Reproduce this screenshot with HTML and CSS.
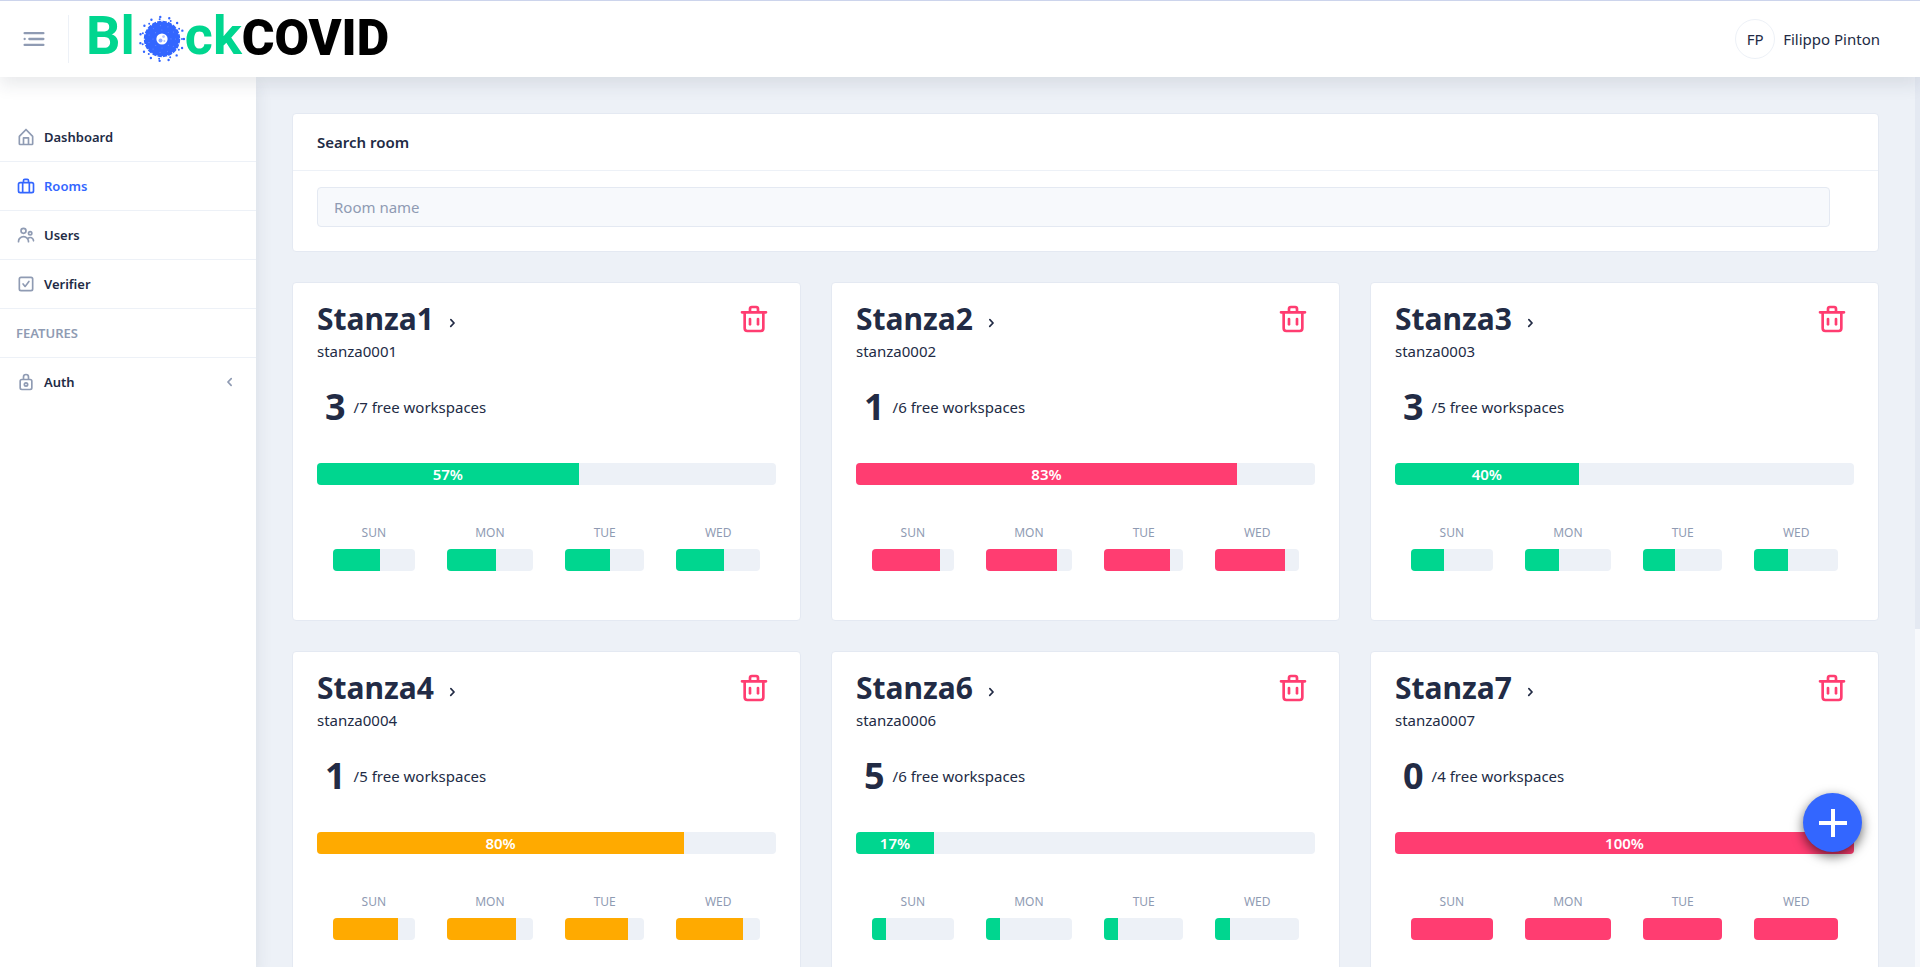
FILE: index.html
```html
<!DOCTYPE html>
<html lang="en">
<head>
<meta charset="utf-8">
<title>BlockCOVID - Rooms</title>
<meta name="viewport" content="width=device-width, initial-scale=1">
<link rel="stylesheet" href="styles.css">
</head>
<body>
<svg class="sprite" aria-hidden="true">
  <symbol id="home" viewBox="0 0 24 24"><path d="M20.42 10.18L12.71 2.3a1 1 0 0 0-1.42 0l-7.71 7.89A2 2 0 0 0 3 11.62V20a2 2 0 0 0 1.89 2h14.22A2 2 0 0 0 21 20v-8.38a2.07 2.07 0 0 0-.58-1.44zM10 20v-6h4v6zm9 0h-3v-7a1 1 0 0 0-1-1H9a1 1 0 0 0-1 1v7H5v-8.42l7-7.15 7 7.19z"/></symbol>
  <symbol id="briefcase" viewBox="0 0 24 24"><path d="M19 7h-3V5.5A2.5 2.5 0 0 0 13.5 3h-3A2.5 2.5 0 0 0 8 5.5V7H5a3 3 0 0 0-3 3v8a3 3 0 0 0 3 3h14a3 3 0 0 0 3-3v-8a3 3 0 0 0-3-3zm-4 2v10H9V9zm-5-3.5a.5.5 0 0 1 .5-.5h3a.5.5 0 0 1 .5.5V7h-4zM4 18v-8a1 1 0 0 1 1-1h2v10H5a1 1 0 0 1-1-1zm16 0a1 1 0 0 1-1 1h-2V9h2a1 1 0 0 1 1 1z"/></symbol>
  <symbol id="people" viewBox="0 0 24 24"><path d="M9 11a4 4 0 1 0-4-4 4 4 0 0 0 4 4zm0-6a2 2 0 1 1-2 2 2 2 0 0 1 2-2zm8 8a3 3 0 1 0-3-3 3 3 0 0 0 3 3zm0-4a1 1 0 1 1-1 1 1 1 0 0 1 1-1zm0 5a5 5 0 0 0-3.06 1.05A7 7 0 0 0 2 20a1 1 0 0 0 2 0 5 5 0 0 1 10 0 1 1 0 0 0 2 0 6.9 6.9 0 0 0-.86-3.35A3 3 0 0 1 20 19a1 1 0 0 0 2 0 5 5 0 0 0-5-5z"/></symbol>
  <symbol id="check" viewBox="0 0 24 24"><path d="M18 3H6a3 3 0 0 0-3 3v12a3 3 0 0 0 3 3h12a3 3 0 0 0 3-3V6a3 3 0 0 0-3-3zm1 15a1 1 0 0 1-1 1H6a1 1 0 0 1-1-1V6a1 1 0 0 1 1-1h12a1 1 0 0 1 1 1z"/><path d="M14.7 8.39l-3.78 5-1.63-2.11a1 1 0 0 0-1.58 1.23l2.43 3.11a1 1 0 0 0 .79.38 1 1 0 0 0 .79-.39l4.57-6a1 1 0 1 0-1.6-1.22z"/></symbol>
  <symbol id="lock" viewBox="0 0 24 24"><path d="M17 8h-1V6.11a4 4 0 1 0-8 0V8H7a3 3 0 0 0-3 3v8a3 3 0 0 0 3 3h10a3 3 0 0 0 3-3v-8a3 3 0 0 0-3-3zm-7-1.89A2.06 2.06 0 0 1 12 4a2.06 2.06 0 0 1 2 2.11V8h-4zM18 19a1 1 0 0 1-1 1H7a1 1 0 0 1-1-1v-8a1 1 0 0 1 1-1h10a1 1 0 0 1 1 1z"/><path d="M12 12a3 3 0 1 0 3 3 3 3 0 0 0-3-3zm0 4a1 1 0 1 1 1-1 1 1 0 0 1-1 1z"/></symbol>
  <symbol id="menu" viewBox="0 0 24 24"><circle cx="4" cy="12" r="1"/><rect x="7" y="11" width="14" height="2" rx=".94"/><rect x="3" y="16" width="18" height="2" rx=".94"/><rect x="3" y="6" width="18" height="2" rx=".94"/></symbol>
  <symbol id="trash" viewBox="0 0 24 24"><path d="M21 6h-5V4.33A2.42 2.42 0 0 0 13.5 2h-3A2.42 2.42 0 0 0 8 4.33V6H3a1 1 0 0 0 0 2h1v11a3 3 0 0 0 3 3h10a3 3 0 0 0 3-3V8h1a1 1 0 0 0 0-2zM10 4.33c0-.16.21-.33.5-.33h3c.29 0 .5.17.5.33V6h-4zM18 19a1 1 0 0 1-1 1H7a1 1 0 0 1-1-1V8h12z"/><path d="M9 17a1 1 0 0 0 1-1v-4a1 1 0 0 0-2 0v4a1 1 0 0 0 1 1z"/><path d="M15 17a1 1 0 0 0 1-1v-4a1 1 0 0 0-2 0v4a1 1 0 0 0 1 1z"/></symbol>
  <symbol id="left" viewBox="0 0 24 24"><path d="M13.36 17a1 1 0 0 1-.72-.31l-3.86-4a1 1 0 0 1 0-1.4l4-4a1 1 0 1 1 1.42 1.42L10.9 12l3.18 3.3a1 1 0 0 1 0 1.41 1 1 0 0 1-.72.29z"/></symbol>
  <symbol id="right" viewBox="0 0 24 24"><path d="M10.5 17a1 1 0 0 1-.71-.29 1 1 0 0 1 0-1.42L13.1 12 9.92 8.69a1 1 0 0 1 0-1.41 1 1 0 0 1 1.42 0l3.86 4a1 1 0 0 1 0 1.4l-4 4a1 1 0 0 1-.7.32z"/></symbol>
</svg>

<header class="header">
  <button class="menu-toggle" type="button" aria-label="Toggle menu"><svg><use href="#menu"/></svg></button>
  <a class="logo" href="#" aria-label="BlockCOVID">
    <span class="logo-block">Bl</span>
    <svg class="virus" viewBox="0 0 46 48" aria-hidden="true">
      <circle cx="23" cy="24" r="17" fill="#36f"/>
      <circle cx="23" cy="24" r="17.2" fill="none" stroke="#36f" stroke-width="2" stroke-dasharray="4.4 1"/>
      <g fill="none" stroke="#36f" stroke-linecap="round">
        <circle cx="23" cy="24" r="20" stroke-width="2" stroke-dasharray="0 11.4"/>
        <circle cx="23" cy="24" r="22" stroke-width="2.4" stroke-dasharray="0 9.2"/>
      </g>
      <g fill="none" stroke="#5c83ff" stroke-linecap="round">
        <circle cx="23" cy="24" r="9" stroke-width="1.2" stroke-dasharray="0 7"/>
        <circle cx="23" cy="24" r="13.5" stroke-width="1.2" stroke-dasharray="0 7.7"/>
      </g>
      <circle cx="23" cy="24" r="5.6" fill="#fff"/>
      <circle cx="21.5" cy="25.6" r="2" fill="#8ea9ff"/><circle cx="24.6" cy="21.6" r="1.4" fill="#b3c5ff"/><circle cx="25.4" cy="26" r="1" fill="#b3c5ff"/>
    </svg>
    <span class="logo-block">ck</span><span class="logo-covid">COVID</span>
  </a>
  <div class="user"><span class="avatar">FP</span><span>Filippo Pinton</span></div>
</header>

<div class="layout">
  <nav class="sidebar" aria-label="Main">
    <ul class="menu">
      <li><a href="#"><svg><use href="#home"/></svg><span>Dashboard</span></a></li>
      <li><a class="active" href="#" aria-current="page"><svg><use href="#briefcase"/></svg><span>Rooms</span></a></li>
      <li><a href="#"><svg><use href="#people"/></svg><span>Users</span></a></li>
      <li><a href="#"><svg><use href="#check"/></svg><span>Verifier</span></a></li>
      <li class="group">FEATURES</li>
      <li><a href="#"><svg><use href="#lock"/></svg><span>Auth</span><svg class="expand"><use href="#left"/></svg></a></li>
    </ul>
  </nav>

  <main class="content">
    <section class="card search">
      <label class="search-title" for="room-name">Search room</label>
      <div class="search-body"><input id="room-name" type="text" placeholder="Room name"></div>
    </section>

    <div class="rooms">
      <article class="card room success">
        <div class="room-head"><h2><a href="#">Stanza1<svg><use href="#right"/></svg></a></h2><button type="button" aria-label="Delete Stanza1"><svg><use href="#trash"/></svg></button></div>
        <p class="code">stanza0001</p>
        <p class="free"><strong>3</strong><span>/7 free workspaces</span></p>
        <div class="bar"><div class="fill" style="width:57%">57%</div></div>
        <div class="days">
          <div class="day"><span>SUN</span><div class="bar"><div class="fill" style="width:57%"></div></div></div>
          <div class="day"><span>MON</span><div class="bar"><div class="fill" style="width:57%"></div></div></div>
          <div class="day"><span>TUE</span><div class="bar"><div class="fill" style="width:57%"></div></div></div>
          <div class="day"><span>WED</span><div class="bar"><div class="fill" style="width:57%"></div></div></div>
        </div>
      </article>
      <article class="card room danger">
        <div class="room-head"><h2><a href="#">Stanza2<svg><use href="#right"/></svg></a></h2><button type="button" aria-label="Delete Stanza2"><svg><use href="#trash"/></svg></button></div>
        <p class="code">stanza0002</p>
        <p class="free"><strong>1</strong><span>/6 free workspaces</span></p>
        <div class="bar"><div class="fill" style="width:83%">83%</div></div>
        <div class="days">
          <div class="day"><span>SUN</span><div class="bar"><div class="fill" style="width:83%"></div></div></div>
          <div class="day"><span>MON</span><div class="bar"><div class="fill" style="width:83%"></div></div></div>
          <div class="day"><span>TUE</span><div class="bar"><div class="fill" style="width:83%"></div></div></div>
          <div class="day"><span>WED</span><div class="bar"><div class="fill" style="width:83%"></div></div></div>
        </div>
      </article>
      <article class="card room success">
        <div class="room-head"><h2><a href="#">Stanza3<svg><use href="#right"/></svg></a></h2><button type="button" aria-label="Delete Stanza3"><svg><use href="#trash"/></svg></button></div>
        <p class="code">stanza0003</p>
        <p class="free"><strong>3</strong><span>/5 free workspaces</span></p>
        <div class="bar"><div class="fill" style="width:40%">40%</div></div>
        <div class="days">
          <div class="day"><span>SUN</span><div class="bar"><div class="fill" style="width:40%"></div></div></div>
          <div class="day"><span>MON</span><div class="bar"><div class="fill" style="width:40%"></div></div></div>
          <div class="day"><span>TUE</span><div class="bar"><div class="fill" style="width:40%"></div></div></div>
          <div class="day"><span>WED</span><div class="bar"><div class="fill" style="width:40%"></div></div></div>
        </div>
      </article>
      <article class="card room warning">
        <div class="room-head"><h2><a href="#">Stanza4<svg><use href="#right"/></svg></a></h2><button type="button" aria-label="Delete Stanza4"><svg><use href="#trash"/></svg></button></div>
        <p class="code">stanza0004</p>
        <p class="free"><strong>1</strong><span>/5 free workspaces</span></p>
        <div class="bar"><div class="fill" style="width:80%">80%</div></div>
        <div class="days">
          <div class="day"><span>SUN</span><div class="bar"><div class="fill" style="width:80%"></div></div></div>
          <div class="day"><span>MON</span><div class="bar"><div class="fill" style="width:80%"></div></div></div>
          <div class="day"><span>TUE</span><div class="bar"><div class="fill" style="width:80%"></div></div></div>
          <div class="day"><span>WED</span><div class="bar"><div class="fill" style="width:80%"></div></div></div>
        </div>
      </article>
      <article class="card room success">
        <div class="room-head"><h2><a href="#">Stanza6<svg><use href="#right"/></svg></a></h2><button type="button" aria-label="Delete Stanza6"><svg><use href="#trash"/></svg></button></div>
        <p class="code">stanza0006</p>
        <p class="free"><strong>5</strong><span>/6 free workspaces</span></p>
        <div class="bar"><div class="fill" style="width:17%">17%</div></div>
        <div class="days">
          <div class="day"><span>SUN</span><div class="bar"><div class="fill" style="width:17%"></div></div></div>
          <div class="day"><span>MON</span><div class="bar"><div class="fill" style="width:17%"></div></div></div>
          <div class="day"><span>TUE</span><div class="bar"><div class="fill" style="width:17%"></div></div></div>
          <div class="day"><span>WED</span><div class="bar"><div class="fill" style="width:17%"></div></div></div>
        </div>
      </article>
      <article class="card room danger">
        <div class="room-head"><h2><a href="#">Stanza7<svg><use href="#right"/></svg></a></h2><button type="button" aria-label="Delete Stanza7"><svg><use href="#trash"/></svg></button></div>
        <p class="code">stanza0007</p>
        <p class="free"><strong>0</strong><span>/4 free workspaces</span></p>
        <div class="bar"><div class="fill" style="width:100%">100%</div></div>
        <div class="days">
          <div class="day"><span>SUN</span><div class="bar"><div class="fill" style="width:100%"></div></div></div>
          <div class="day"><span>MON</span><div class="bar"><div class="fill" style="width:100%"></div></div></div>
          <div class="day"><span>TUE</span><div class="bar"><div class="fill" style="width:100%"></div></div></div>
          <div class="day"><span>WED</span><div class="bar"><div class="fill" style="width:100%"></div></div></div>
        </div>
      </article>
    </div>
  </main>
  <div class="scroll-track" aria-hidden="true"><div class="scroll-thumb"></div></div>
</div>

<button class="fab" type="button" aria-label="Add room"><svg viewBox="0 0 28 28"><path d="M12 0h4v12h12v4H16v12h-4V16H0v-4h12z"/></svg></button>
</body>
</html>
```
FILE: styles.css
```css
* { box-sizing: border-box; }
html, body { height: 100%; }
body {
  margin: 0;
  display: flex;
  flex-direction: column;
  overflow: hidden;
  background: #edf1f7;
  color: #222b45;
  font: 400 15px/20px "Noto Sans", "Open Sans", sans-serif;
}
h2, p, ul { margin: 0; padding: 0; }
a { color: inherit; text-decoration: none; }
button { border: 0; padding: 0; background: none; font: inherit; color: inherit; cursor: pointer; }
svg { display: block; fill: currentColor; flex: none; }
.sprite { position: absolute; width: 0; height: 0; }

.header {
  position: relative;
  z-index: 2;
  flex: none;
  display: flex;
  align-items: center;
  height: 77px;
  padding: 0 40px 0 20px;
  background: #fff;
  border-top: 1px solid #ccd4ec;
  box-shadow: 0 8px 16px rgba(44, 51, 73, .1);
}
.menu-toggle { color: #8f9bb3; }
.menu-toggle svg { width: 28px; height: 28px; }
.logo {
  display: flex;
  align-items: center;
  height: 48px;
  margin-left: 20px;
  padding-left: 17px;
  border-left: 1px solid #edf1f7;
  font-family: Roboto, sans-serif;
  line-height: 44px;
}
.logo-block { padding-bottom: 6px; color: #00d68f; font-size: 54px; font-weight: 700; }
.logo-covid { padding-bottom: 2px; color: #000; font-size: 50px; font-weight: 900; }
.virus { width: 46px; height: 48px; margin-left: 4px; }
.user { display: flex; align-items: center; gap: 8px; margin-left: auto; }
.avatar {
  display: flex;
  align-items: center;
  justify-content: center;
  width: 40px;
  height: 40px;
  border: 1px solid #edf1f7;
  border-radius: 50%;
}

.layout { flex: 1; min-height: 0; display: flex; }
.sidebar {
  flex: none;
  width: 256px;
  padding-top: 36px;
  background: #fff;
  box-shadow: 0 8px 16px rgba(44, 51, 73, .1);
}
.menu { list-style: none; font-size: 13px; font-weight: 600; line-height: 24px; }
.menu li { border-bottom: 1px solid #edf1f7; }
.menu li:last-child { border-bottom: 0; }
.menu a { display: flex; align-items: center; gap: 8px; padding: 12px 16px; }
.menu svg { width: 20px; height: 20px; color: #8f9bb3; }
.menu .active, .menu .active svg { color: #36f; }
.menu .expand { margin-left: auto; }
.menu .group { padding: 12px 16px; color: #8f9bb3; }

.content { flex: 1; min-width: 0; padding: 36px; overflow: hidden; }
.card { background: #fff; border: 1px solid #e4e9f2; border-radius: 4px; }
.search { margin-bottom: 30px; }
.search-title { display: block; padding: 18px 24px; border-bottom: 1px solid #edf1f7; font-weight: 600; }
.search-body { padding: 16px 48px 24px 24px; }
.search input {
  display: block;
  width: 100%;
  height: 40px;
  padding: 0 16px;
  border: 1px solid #e4e9f2;
  border-radius: 4px;
  background: #f7f9fc;
  font: inherit;
  color: inherit;
}
.search input::placeholder { color: #8f9bb3; opacity: 1; }

.rooms { display: grid; grid-template-columns: repeat(auto-fill, minmax(440px, 1fr)); gap: 30px; }
.room { padding: 16px 24px 49px; }
.room-head { display: flex; align-items: center; justify-content: space-between; height: 40px; padding-right: 6px; }
.room-head button { color: #ff3d71; }
.room-head button svg { width: 32px; height: 32px; }
.room h2 { font-size: 30px; font-weight: 700; line-height: 40px; }
.room h2 a { display: flex; align-items: center; gap: 8px; }
.room h2 svg { width: 20px; height: 20px; margin-top: 8px; }
.code { margin-top: 2px; }
.free { display: flex; align-items: center; gap: 8px; padding: 0 8px; margin: 22px 0 32px; }
.free strong { font-size: 36px; line-height: 48px; }
.bar { height: 22px; overflow: hidden; border-radius: 4px; background: #edf1f7; }
.fill { height: 22px; color: #fff; font-weight: 600; line-height: 22px; text-align: center; }
.success .fill { background: #00d68f; }
.danger .fill { background: #ff3d71; }
.warning .fill { background: #fa0; }
.days { display: flex; margin-top: 40px; }
.day { flex: 1 1 auto; padding: 0 16px; color: #8f9bb3; font-size: 12px; line-height: 16px; text-align: center; }
.day .bar { margin-top: 8px; }

.scroll-track { flex: none; width: 5px; background: #f7f9fc; }
.scroll-thumb { height: 62%; background: #e4e9f2; }

.fab {
  position: fixed;
  right: 58px;
  bottom: 115px;
  z-index: 3;
  display: flex;
  align-items: center;
  justify-content: center;
  width: 59px;
  height: 59px;
  border-radius: 50%;
  background: #36f;
  color: #fff;
  box-shadow: 0 4px 12px rgba(0, 0, 0, .6);
}
.fab svg { width: 28px; height: 28px; }
```
